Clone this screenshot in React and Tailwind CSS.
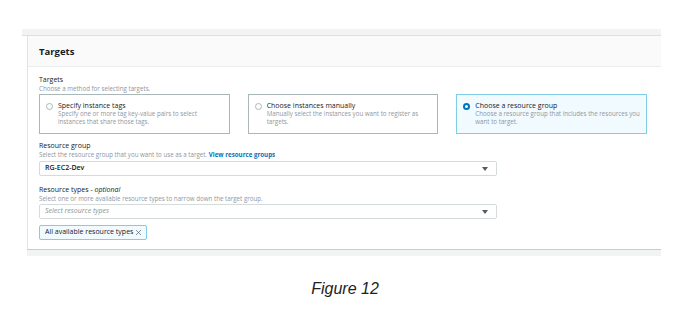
import { X } from "lucide-react";

const OPTIONS = [
  {
    title: "Specify instance tags",
    desc: "Specify one or more tag key-value pairs to select instances that share those tags.",
  },
  {
    title: "Choose instances manually",
    desc: "Manually select the instances you want to register as targets.",
  },
  {
    title: "Choose a resource group",
    desc: "Choose a resource group that includes the resources you want to target.",
    selected: true,
  },
];

function Caret() {
  return (
    <svg width="6" height="4" viewBox="0 0 6 4" className="mr-[8px]">
      <path d="M0 0 H6 L3 4 Z" fill="#545b64" />
    </svg>
  );
}

function Radio({ on }) {
  if (on) {
    return (
      <span className="mt-[2px] w-[7px] h-[7px] shrink-0 rounded-full border-[2px] border-[#0073bb] bg-white" />
    );
  }
  return (
    <span className="mt-[2px] w-[7px] h-[7px] shrink-0 rounded-full border border-[#aab7b8] bg-white" />
  );
}

export default function App() {
  return (
    <div className="w-[690px] h-[335px] bg-white text-[#16191f] font-['Open_Sans',sans-serif]">
      <div className="pt-[29px] pl-[22px]">
        {/* top strip */}
        <div className="w-[639px] h-[7px] bg-[#f2f3f3] border-b border-[#dcdfdf]" />

        {/* panel */}
        <div className="ml-[5px] w-[634px] border-l border-[#e1e4e4] bg-white">
          <div className="h-[31px] bg-[#fafafa] border-b border-[#eaeded] flex items-center pl-[11px] pt-[2px] text-[9.5px] font-bold">
            Targets
          </div>

          <div className="pl-[11px] pr-[14px] pt-[8px] pb-[9px]">
            <div className="text-[7px] leading-[9px]">Targets</div>
            <div className="text-[6.2px] leading-[9px] text-[#8d979f]">
              Choose a method for selecting targets.
            </div>

            <div className="mt-[1px] grid grid-cols-3 gap-[18px]">
              {OPTIONS.map((o) => (
                <div
                  key={o.title}
                  className={`h-[40px] flex gap-[5px] pl-[6px] pr-[6px] pt-[6px] border ${
                    o.selected
                      ? "border-[#7fcde6] bg-[#f1faff]"
                      : "border-[#aab7b8] bg-white"
                  }`}
                >
                  <Radio on={o.selected} />
                  <div>
                    <div className="text-[7px] leading-[9px]">{o.title}</div>
                    <div className="text-[6.2px] leading-[8px] text-[#8d979f]">
                      {o.desc}
                    </div>
                  </div>
                </div>
              ))}
            </div>

            <div className="mt-[7px] text-[7px] leading-[9px]">Resource group</div>
            <div className="text-[6.2px] leading-[9px] text-[#8d979f]">
              Select the resource group that you want to use as a target.{" "}
              <span className="font-bold text-[#0073bb]">View resource groups</span>
            </div>
            <div className="mt-[2px] w-[458px] h-[15px] border border-[#d5dbdb] rounded-[2px] flex items-center justify-between pl-[5px]">
              <span className="text-[7px] font-semibold">RG-EC2-Dev</span>
              <Caret />
            </div>

            <div className="mt-[9px] text-[7px] leading-[9px]">
              Resource types - <span className="italic">optional</span>
            </div>
            <div className="text-[6.2px] leading-[9px] text-[#8d979f]">
              Select one or more available resource types to narrow down the target group.
            </div>
            <div className="mt-[1px] w-[458px] h-[15px] border border-[#d5dbdb] rounded-[2px] flex items-center justify-between pl-[5px]">
              <span className="text-[7px] italic text-[#879596]">Select resource types</span>
              <Caret />
            </div>

            <div className="mt-[6px] w-[108px] h-[15px] border border-[#7fcde6] bg-[#f1faff] rounded-[2px] flex items-center justify-between pl-[5px] pr-[3px] whitespace-nowrap">
              <span className="text-[7px] font-medium">All available resource types</span>
              <X size={9} strokeWidth={1.8} color="#545b64" />
            </div>
          </div>
        </div>

        {/* bottom strip */}
        <div className="ml-[5px] w-[634px] h-[7px] bg-[#f2f3f3] border-t border-[#c9cccc]" />
      </div>

      <div className="mt-[21px] text-center italic text-[16px] text-[#222] font-['Liberation_Sans',sans-serif]">
        Figure 12
      </div>
    </div>
  );
}
